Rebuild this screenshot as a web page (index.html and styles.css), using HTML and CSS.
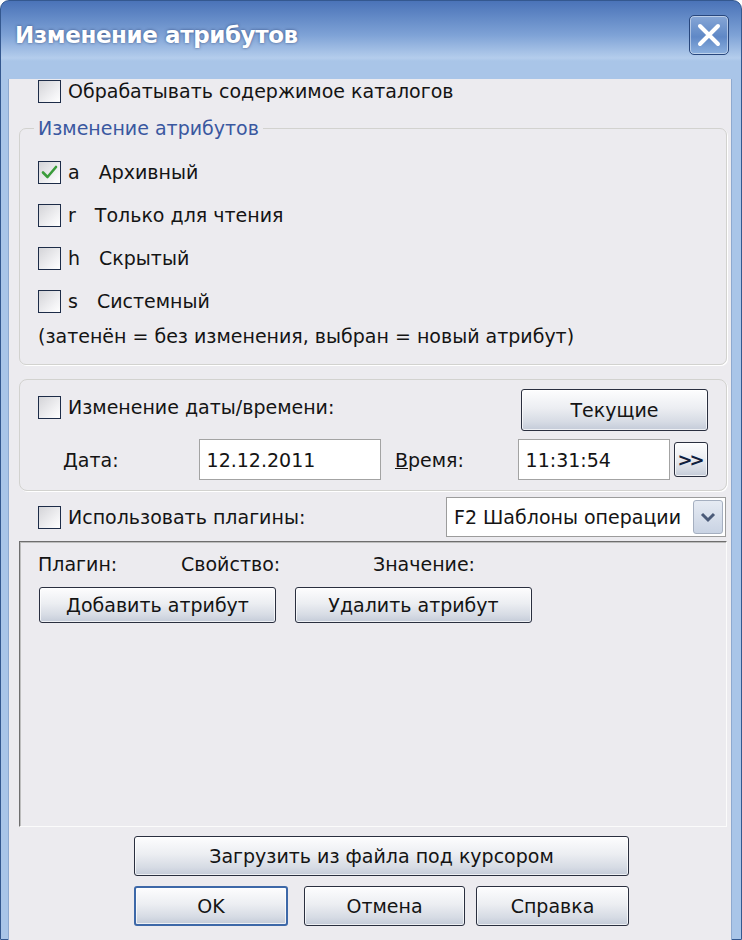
FILE: index.html
```html
<!DOCTYPE html>
<html lang="ru">
<head>
    <meta charset="UTF-8">
    <title>Изменение атрибутов</title>
    <link rel="stylesheet" href="styles.css">
</head>
<body>
<div class="window">
    <div class="titlebar">
        <span class="title">Изменение атрибутов</span>
        <span class="close">
            <svg width="26" height="26" viewBox="0 0 26 26"><path d="M4 4 L22 22 M22 4 L4 22" stroke="#fff" stroke-width="4" stroke-linecap="round"/></svg>
        </span>
    </div>
    <div class="client">
        <label class="check top_check"><span class="box"></span>Обрабатывать содержимое каталогов</label>

        <fieldset class="group">
            <legend>Изменение атрибутов</legend>
            <div class="attrs">
                <label class="check"><span class="box"><svg width="21" height="21" viewBox="0 0 21 21"><path d="M4 10.5 L8.5 15 L17 5" fill="none" stroke="#3a9c3a" stroke-width="2.6" stroke-linecap="round" stroke-linejoin="round"/></svg></span><span class="key">a</span>Архивный</label>
                <label class="check"><span class="box"></span><span class="key">r</span>Только для чтения</label>
                <label class="check"><span class="box"></span><span class="key">h</span>Скрытый</label>
                <label class="check"><span class="box"></span><span class="key">s</span>Системный</label>
            </div>
            <div class="note">(затенён = без изменения, выбран = новый атрибут)</div>
        </fieldset>

        <div class="panel">
            <div class="date_head">
                <label class="check date_check"><span class="box"></span>Изменение даты/времени:</label>
                <div class="btn now_btn">Текущие</div>
            </div>
            <div class="date_row">
                <span class="date_label"><u>Д</u>ата:</span>
                <div class="field date_field">12.12.2011</div>
                <span class="time_label"><u>В</u>ремя:</span>
                <div class="field time_field">11:31:54</div>
                <div class="btn more_btn">&gt;&gt;</div>
            </div>
        </div>

        <div class="plugin_row">
            <label class="check"><span class="box"></span>Использовать плагины:</label>
            <div class="select">
                <span class="select_text">F2 Шаблоны операции</span>
                <span class="select_arrow">
                    <svg width="16" height="12" viewBox="0 0 16 12"><path d="M2 3 L8 9 L14 3" fill="none" stroke="#4a5a78" stroke-width="3"/></svg>
                </span>
            </div>
        </div>

        <div class="plugin_box">
            <div class="plugin_labels">
                <span class="lbl_plugin">Плагин:</span>
                <span class="lbl_prop">Свойство:</span>
                <span class="lbl_value">Значение:</span>
            </div>
            <div class="plugin_buttons">
                <div class="btn attr_btn">Добавить атрибут</div>
                <div class="btn attr_btn">Удалить атрибут</div>
            </div>
        </div>

        <div class="footer">
            <div class="btn load_btn">Загрузить из файла под курсором</div>
            <div class="footer_row">
                <div class="btn ok_btn">OK</div>
                <div class="btn cancel_btn">Отмена</div>
                <div class="btn help_btn">Справка</div>
            </div>
        </div>
    </div>
</div>
</body>
</html>
```

FILE: styles.css
```css
*
{
    box-sizing: border-box;
}
body
{
    margin: 0;
    width: 742px;
    height: 940px;
    overflow: hidden;
    background-color: #ffffff;
    font-family: "DejaVu Sans", "Liberation Sans", sans-serif;
    color: #141414;
}
.window
{
    width: 742px;
    height: 940px;
    border: 1px solid #34588f;
    border-radius: 9px 9px 0 0;
    background: linear-gradient(#4a73b8, #7ea2d6 34px, #b4cdec 57px, #a9c5e8 60px, #a9c5e8);
}
.titlebar
{
    height: 57px;
    display: flex;
    align-items: center;
    justify-content: space-between;
    padding: 10px 12px 0 14px;
}
.title
{
    color: #ffffff;
    font-size: 23px;
    font-weight: bold;
    letter-spacing: -0.4px;
    text-shadow: 0 0 3px rgba(30, 50, 100, 0.7);
}
.close
{
    width: 40px;
    height: 40px;
    border: 1px solid #28477d;
    border-radius: 5px;
    box-shadow: inset 0 0 0 1px rgba(255, 255, 255, 0.45);
    background: linear-gradient(#86a6d6, #5f88c6 55%, #8cb0de);
    display: flex;
    align-items: center;
    justify-content: center;
}
.client
{
    height: 874px;
    margin: 0 9px 0 7px;
    padding: 0 4px 0 10px;
    background-color: #ecebef;
    border-left: 1px solid #8ea9cf;
    border-right: 1px solid #8ea9cf;
    font-size: 19px;
}
.check
{
    display: flex;
    align-items: center;
    height: 24px;
    white-space: nowrap;
}
.box
{
    width: 23px;
    height: 23px;
    flex-shrink: 0;
    margin-right: 7px;
    border: 1px solid #1d2c48;
    background: linear-gradient(135deg, #d4d4d8, #f3f3f5 70%, #ffffff);
}
.key
{
    margin-right: 19px;
}
.top_check
{
    margin: 21px 0 0 19px;
}
.group
{
    margin: 14px 0 0 0;
    padding: 0 0 16px 18px;
    border: 1px solid #d2d2cf;
    border-radius: 7px;
    box-shadow: 1px 1px 0 #ffffff;
}
.group legend
{
    padding: 0 4px;
    margin-left: -4px;
    height: 22px;
    line-height: 22px;
    font-size: 19px;
    color: #3a58a0;
}
.attrs
{
    display: flex;
    flex-direction: column;
    gap: 19px;
    margin-top: 21px;
}
.note
{
    margin-top: 11px;
    height: 24px;
    line-height: 24px;
}
.panel
{
    margin-top: 14px;
    height: 112px;
    padding: 9px 18px 0 18px;
    border: 1px solid #d2d2cf;
    border-radius: 8px;
    box-shadow: 1px 1px 0 #ffffff;
}
.date_head
{
    display: flex;
    justify-content: space-between;
    align-items: flex-start;
}
.date_check
{
    margin-top: 6px;
}
.btn
{
    display: flex;
    align-items: center;
    justify-content: center;
    border: 1px solid #2a2f3f;
    border-radius: 3px;
    background: linear-gradient(#fdfdfe, #eceef2 45%, #d6dbe4 80%, #c4cbd8);
    box-shadow: inset 0 0 0 1px rgba(255, 255, 255, 0.7);
    white-space: nowrap;
}
.now_btn
{
    width: 187px;
    height: 42px;
}
.date_row
{
    display: flex;
    align-items: center;
    margin-top: 8px;
}
.date_label
{
    width: 161px;
    padding-left: 25px;
}
.time_label
{
    width: 137px;
    padding-left: 14px;
}
.field
{
    height: 41px;
    padding: 0 7px;
    display: flex;
    align-items: center;
    background-color: #ffffff;
    border: 1px solid #a3a3a3;
}
.date_field
{
    width: 183px;
}
.time_field
{
    width: 153px;
}
.more_btn
{
    width: 34px;
    height: 35px;
    margin-left: 4px;
    font-weight: bold;
    font-size: 18px;
    color: #10203e;
    letter-spacing: -3px;
    padding-right: 3px;
}
.plugin_row
{
    display: flex;
    align-items: center;
    justify-content: space-between;
    height: 40px;
    margin-top: 6px;
    padding-left: 19px;
}
.select
{
    width: 280px;
    height: 40px;
    margin-right: 1px;
    display: flex;
    align-items: center;
    justify-content: space-between;
    padding: 0 2px 0 7px;
    background-color: #ffffff;
    border: 1px solid #9c9c9c;
}
.select_arrow
{
    width: 30px;
    height: 34px;
    display: flex;
    align-items: center;
    justify-content: center;
    border: 1px solid #a5afc0;
    border-radius: 3px;
    background: linear-gradient(#e6ebf3, #c9d3e3);
}
.plugin_box
{
    margin-top: 4px;
    height: 286px;
    border: 1px solid;
    border-color: #6e6e6e #fbfbfb #fbfbfb #6e6e6e;
    box-shadow: inset 1px 1px 0 #bdbdbd;
    padding: 10px 0 0 18px;
}
.plugin_labels
{
    display: flex;
    height: 24px;
    line-height: 24px;
}
.lbl_plugin
{
    width: 143px;
}
.lbl_prop
{
    width: 192px;
}
.plugin_buttons
{
    display: flex;
    gap: 19px;
    margin-top: 11px;
    padding-left: 1px;
}
.attr_btn
{
    width: 237px;
    height: 36px;
}
.footer
{
    margin: 9px 0 0 115px;
}
.load_btn
{
    width: 495px;
    height: 40px;
}
.footer_row
{
    display: flex;
    margin-top: 10px;
}
.footer_row .btn
{
    height: 40px;
}
.ok_btn
{
    width: 154px;
    border: 2px solid #3d68a8;
}
.cancel_btn
{
    width: 161px;
    margin-left: 16px;
}
.help_btn
{
    width: 153px;
    margin-left: 11px;
}
```
